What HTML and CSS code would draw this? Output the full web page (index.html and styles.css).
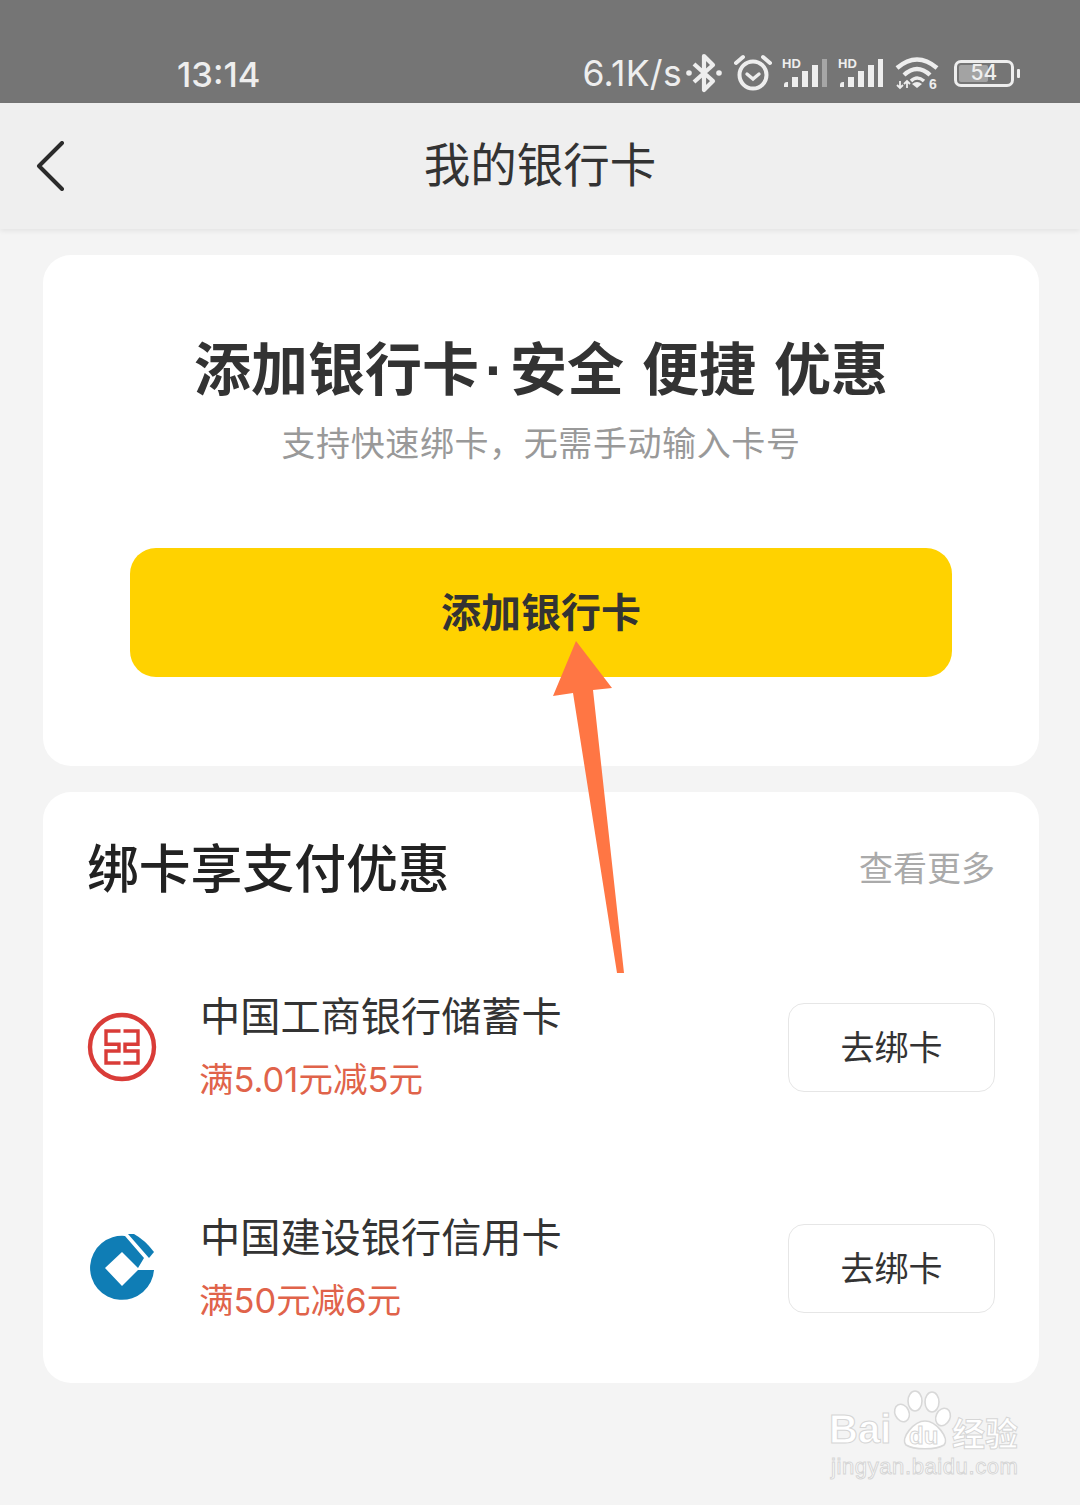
FILE: index.html
```html
<!DOCTYPE html>
<html lang="zh-CN">
<head>
    <meta charset="UTF-8">
    <meta name="viewport" content="width=device-width, initial-scale=1.0">
    <title>我的银行卡</title>
    <link rel="stylesheet" href="styles.css">
</head>
<body>
    <div class="status-bar">
        <span class="time">13:14</span>
        <div class="status-right">
            <span class="speed">6.1K/s</span>
            <svg class="icon-bt" width="36" height="40" viewBox="0 0 36 40" fill="none" stroke="#eee" stroke-width="4.2" stroke-linejoin="round">
                <path d="M8 11 L27 28 L18 37 V3 L27 12 L8 29"/>
                <circle cx="3" cy="20" r="2.8" fill="#eee" stroke="none"/>
                <circle cx="33" cy="20" r="2.8" fill="#eee" stroke="none"/>
            </svg>
            <svg class="icon-alarm" width="38" height="38" viewBox="0 0 38 38" fill="none" stroke="#eee" stroke-linecap="round">
                <circle cx="19" cy="21" r="13.5" stroke-width="4"/>
                <path d="M13 20 L19 25 L25 20" stroke-width="3.4"/>
                <path d="M2 9 L9 3 M36 9 L29 3" stroke-width="4"/>
            </svg>
            <svg class="icon-signal" width="46" height="32" viewBox="0 0 46 32">
                <text x="0" y="11" class="hd">HD</text>
                <path d="M2 30 v-2 a3 3 0 0 1 3 -3 h1 v5z" fill="#eee"/>
                <rect x="10" y="20" width="6" height="10" fill="#eee"/>
                <rect x="20" y="14" width="6" height="16" fill="#eee"/>
                <rect x="30" y="8" width="6" height="22" fill="#eee"/>
                <rect x="40" y="2" width="5" height="28" fill="#a6a6a6"/>
            </svg>
            <svg class="icon-signal" width="46" height="32" viewBox="0 0 46 32">
                <text x="0" y="11" class="hd">HD</text>
                <path d="M2 30 v-2 a3 3 0 0 1 3 -3 h1 v5z" fill="#eee"/>
                <rect x="10" y="20" width="6" height="10" fill="#eee"/>
                <rect x="20" y="14" width="6" height="16" fill="#eee"/>
                <rect x="30" y="8" width="6" height="22" fill="#eee"/>
                <rect x="40" y="2" width="5" height="28" fill="#eee"/>
            </svg>
            <svg class="icon-wifi" width="44" height="34" viewBox="0 0 44 34" fill="none" stroke="#eee" stroke-width="4.4">
                <path d="M1 12 Q21 -5 41 12"/>
                <path d="M8 19 Q21 7 34 19"/>
                <path d="M15 25 Q21 19 28 25" stroke-width="3.5"/>
                <path d="M21 32 L16 28 Q21 24 26 28z" fill="#eee" stroke="none"/>
                <path d="M4 25 v7 M1 29 l3 3 l3 -3 M11 32 v-7 M8 28 l3 -3 l3 3" stroke-width="1.8"/>
                <text x="33" y="33" class="wifi-six">6</text>
            </svg>
            <div class="battery">
                <div class="battery-box">
                    <div class="battery-level"></div>
                    <span class="battery-text">54</span>
                </div>
                <div class="battery-tip"></div>
            </div>
        </div>
    </div>

    <div class="nav">
        <svg class="back" width="30" height="50" viewBox="0 0 30 50" fill="none" stroke="#2b2b2b" stroke-width="4" stroke-linecap="round" stroke-linejoin="round">
            <path d="M26 2 L3 25 L26 48"/>
        </svg>
        <h1 class="nav-title">我的银行卡</h1>
    </div>

    <div class="main">
        <div class="card add-card">
            <h2 class="add-title">添加银行卡<span class="dot">·</span>安全 便捷 优惠</h2>
            <p class="add-sub">支持快速绑卡，无需手动输入卡号</p>
            <button class="add-btn">添加银行卡</button>
        </div>

        <div class="card offers">
            <div class="offers-head">
                <h3 class="offers-title">绑卡享支付优惠</h3>
                <span class="more">查看更多</span>
            </div>

            <div class="bank-row">
                <svg class="bank-logo" width="70" height="70" viewBox="0 0 70 70" fill="none" stroke="#d93c38">
                    <circle cx="35" cy="35" r="32" stroke-width="4.4"/>
                    <path d="M33.5 19 H19 V32.3 H32 V39 H19 V51 H33.5" stroke-width="3.4"/>
                    <path d="M36.5 19 H51 V32.3 H38 V39 H51 V51 H36.5" stroke-width="3.4"/>
                </svg>
                <div class="bank-info">
                    <div class="bank-name">中国工商银行储蓄卡</div>
                    <div class="bank-promo">满5.01元减5元</div>
                </div>
                <button class="bind-btn">去绑卡</button>
            </div>

            <div class="bank-row">
                <svg class="bank-logo" width="70" height="70" viewBox="17 18 70 70">
                    <path d="M55 21 A32 32 0 1 0 84 55 H68 L52 71 L35 53 L52 37 L68 53 L74 43 Z" fill="#0f7db5"/>
                    <path d="M58 19 L64 19 Q75 25 84 37 L79 43 Z" fill="#0f7db5"/>
                </svg>
                <div class="bank-info">
                    <div class="bank-name">中国建设银行信用卡</div>
                    <div class="bank-promo">满50元减6元</div>
                </div>
                <button class="bind-btn">去绑卡</button>
            </div>
        </div>
    </div>

    <!-- annotation arrow drawn over the screenshot -->
    <svg class="arrow" width="1080" height="1505" viewBox="0 0 1080 1505">
        <path d="M576 641 L612 688 L593 690 L624 973 L617 973 L573 693 L553 696 Z" fill="#ff7644"/>
    </svg>

    <!-- watermark -->
    <svg class="watermark" width="200" height="95" viewBox="0 0 200 95">
        <text x="1" y="55" class="wm-bai">Bai</text>
        <g fill="#fff" stroke="#d8d8d8" stroke-width="1.6">
            <ellipse cx="74" cy="25" rx="7" ry="9" transform="rotate(-25 74 25)"/>
            <ellipse cx="87" cy="13" rx="7" ry="10"/>
            <ellipse cx="104" cy="14" rx="7" ry="10"/>
            <ellipse cx="115" cy="29" rx="7" ry="9" transform="rotate(25 115 29)"/>
            <path d="M97 33 C108 33 122 50 116 57 C108 62 86 62 78 57 C72 50 86 33 97 33z"/>
        </g>
        <text x="81" y="56" class="wm-du">du</text>
        <text x="124" y="58" class="wm-cn">经验</text>
        <text x="3" y="86" class="wm-url">jingyan.baidu.com</text>
    </svg>
</body>
</html>
```

FILE: styles.css
```css
* {
    box-sizing: border-box;
}
body {
    margin: 0;
    width: 1080px;
    height: 1505px;
    position: relative;
    overflow: hidden;
    background-color: #f4f4f4;
    font-family: "Noto Sans CJK SC", "Noto Sans", sans-serif;
}
h1, h2, h3, p {
    margin: 0;
}
button {
    font-family: inherit;
    cursor: pointer;
}

/* status bar */
.status-bar {
    height: 103px;
    background-color: #757575;
    color: #eee;
    display: flex;
    justify-content: space-between;
    align-items: flex-end;
    padding: 0 60px 6px 177px;
    font-family: Inter, sans-serif;
}
.time {
    font-size: 34.5px;
    font-weight: 500;
    line-height: 44px;
}
.status-right {
    display: flex;
    align-items: center;
    height: 48px;
}
.speed {
    font-size: 35.5px;
    letter-spacing: 0.3px;
    margin-right: 4px;
}
.icon-alarm {
    margin-left: 12px;
}
.icon-signal {
    margin-left: 10px;
}
.icon-wifi {
    margin-left: 12px;
    overflow: visible;
}
.hd {
    font: bold 13px "Liberation Sans", sans-serif;
    fill: #eee;
}
.wifi-six {
    font: bold 14px "Liberation Sans", sans-serif;
    fill: #eee;
    stroke: none;
}
.battery {
    display: flex;
    align-items: center;
    margin-left: 14px;
}
.battery-box {
    width: 60px;
    height: 27px;
    border: 3px solid #eee;
    border-radius: 7px;
    position: relative;
    display: flex;
    align-items: center;
    justify-content: center;
}
.battery-level {
    position: absolute;
    left: 2px;
    top: 2px;
    bottom: 2px;
    width: 29px;
    background-color: #a3a3a3;
    border-radius: 2px;
}
.battery-text {
    position: relative;
    font-size: 21px;
    font-weight: 500;
    line-height: 20px;
    color: #eee;
}
.battery-tip {
    width: 3px;
    height: 9px;
    margin-left: 3px;
    background-color: #eee;
    border-radius: 1px;
}

/* nav */
.nav {
    height: 126px;
    padding-bottom: 8px;
    background-color: #efefef;
    box-shadow: 0 2px 5px rgba(0, 0, 0, 0.07);
    display: flex;
    align-items: center;
    justify-content: center;
    position: relative;
}
.back {
    position: absolute;
    left: 36px;
    top: 38px;
}
.nav-title {
    font-size: 46.5px;
    font-weight: 400;
    color: #333;
    line-height: 60px;
}

/* cards */
.main {
    display: flex;
    flex-direction: column;
    gap: 26px;
    padding: 26px 41px 0 43px;
}
.card {
    background-color: #fff;
    border-radius: 28px;
}
.add-card {
    height: 511px;
    display: flex;
    flex-direction: column;
    align-items: center;
    padding-top: 72px;
}
.add-title {
    height: 76px;
    font-size: 57px;
    line-height: 76px;
    font-weight: 700;
    color: #333;
    white-space: nowrap;
    word-spacing: 5px;
}
.dot {
    font-family: "Liberation Sans", sans-serif;
    margin: 0 6px;
}
.add-sub {
    font-size: 34px;
    line-height: 44px;
    letter-spacing: 0.6px;
    margin-top: 17px;
    color: #999;
}
.add-btn {
    width: 822px;
    height: 129px;
    padding-bottom: 6px;
    margin-top: 84px;
    border: none;
    border-radius: 26px;
    background-color: #ffd200;
    color: #333;
    font-size: 40px;
    font-weight: 700;
}

.offers {
    height: 591px;
    padding: 0 44px;
}
.offers-head {
    display: flex;
    justify-content: space-between;
    align-items: center;
    height: 72px;
    padding-top: 38px;
    box-sizing: content-box;
    margin-bottom: 101px;
}
.offers-title {
    font-size: 51.8px;
    line-height: 72px;
    font-weight: 500;
    color: #222;
}
.more {
    font-size: 34px;
    color: #aaa;
}
.bank-row {
    display: flex;
    align-items: center;
    height: 88px;
    margin-bottom: 133px;
}
.bank-logo {
    flex-shrink: 0;
    margin-right: 45px;
}
.bank-info {
    flex: 1;
    padding-bottom: 3px;
}
.bank-name {
    font-size: 40.2px;
    line-height: 50px;
    color: #333;
    margin-left: -2px;
}
.bank-promo {
    font-family: Inter, "Noto Sans CJK SC", sans-serif;
    font-size: 34.5px;
    line-height: 44px;
    margin-top: 19px;
    color: #e0634a;
    margin-left: -3px;
}
.bind-btn {
    width: 207px;
    height: 89px;
    padding-bottom: 4px;
    border: 1px solid #e6e6e6;
    border-radius: 16px;
    background-color: #fff;
    color: #333;
    font-size: 34px;
}

/* overlays */
.arrow {
    position: absolute;
    left: 0;
    top: 0;
    pointer-events: none;
}
.watermark {
    position: absolute;
    left: 828px;
    top: 1388px;
}
.watermark text {
    fill: #fff;
    stroke: #d6d6d6;
    stroke-width: 1;
}
.wm-bai {
    font: bold 40px "Liberation Sans", sans-serif;
}
.wm-du {
    font: bold 24px "Liberation Sans", sans-serif;
}
.wm-cn {
    font: bold 33px "Noto Sans CJK SC", sans-serif;
}
.wm-url {
    font: 22px "Liberation Sans", sans-serif;
    letter-spacing: 0.6px;
}
```
